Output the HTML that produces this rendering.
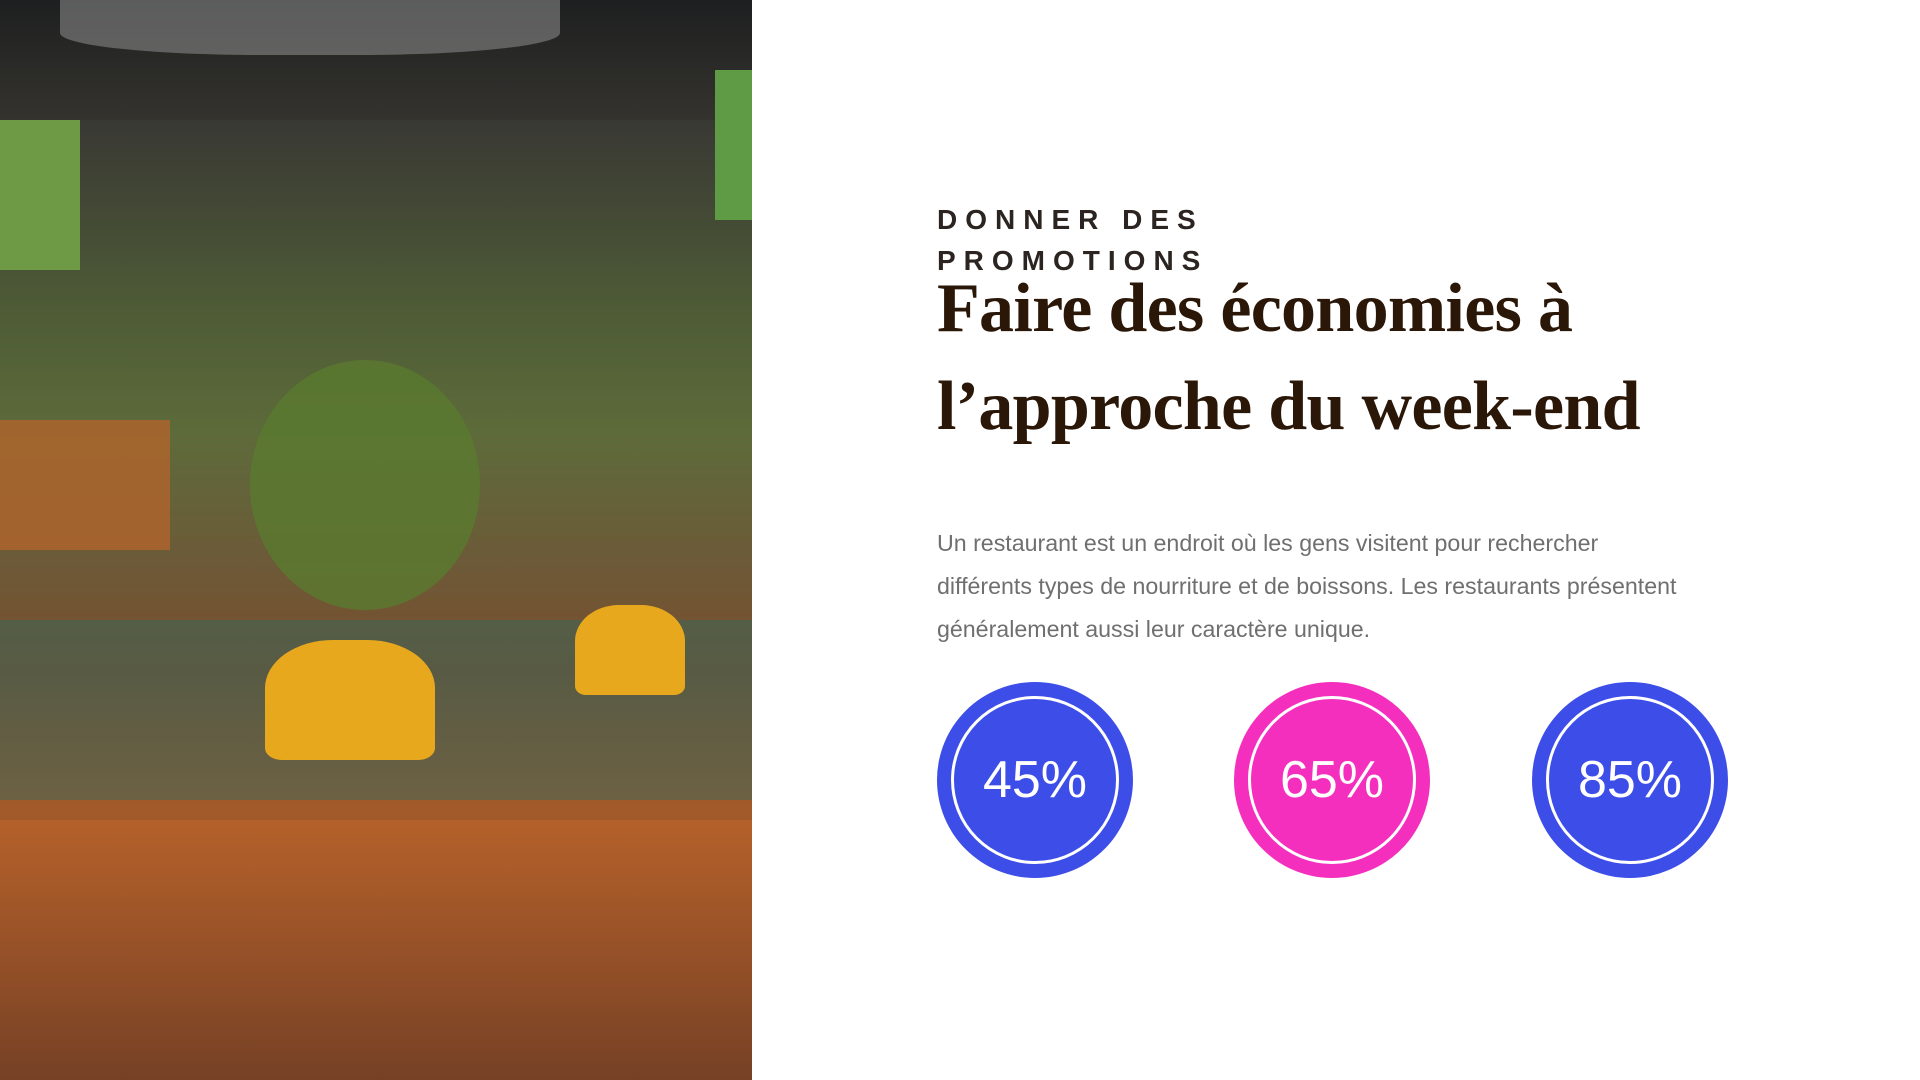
<!DOCTYPE html>
<html><head><meta charset="utf-8"><style>
body{margin:0;width:1920px;height:1080px;position:relative;overflow:hidden;background:#fff;font-family:"Liberation Sans",sans-serif}
.photo{position:absolute;left:0;top:0;width:752px;height:1080px;overflow:hidden;
background:linear-gradient(180deg,#2a2b2c 0%,#3a3a34 12%,#4d5a36 28%,#5d6b3a 40%,#6c5a38 52%,#7a4e2c 62%,#a35a2a 75%,#8a4a26 88%,#5a3420 100%)}
.sub{position:absolute;left:937px;top:199px;font-size:28px;font-weight:bold;letter-spacing:8px;color:#2b2420;line-height:41px}
.title{position:absolute;left:937px;top:260px;font-family:"Liberation Serif",serif;font-weight:bold;font-size:70px;color:#2a1708;line-height:98px;letter-spacing:-0.7px}
.para{position:absolute;left:937px;top:522px;width:900px;font-size:23.2px;color:#6f6f6f;line-height:43px;white-space:nowrap}
.c{position:absolute;top:682px;width:196px;height:196px;border-radius:50%;display:flex;align-items:center;justify-content:center;color:#fff;font-size:52px}
.c::after{content:"";position:absolute;left:14px;top:14px;right:14px;bottom:14px;border:3px solid #fff;border-radius:50%}
</style></head><body>
<div class="photo">
<div style="position:absolute;left:0;top:0;width:752px;height:120px;background:linear-gradient(180deg,#1e1f20,#34332e)"></div>
<div style="position:absolute;left:60px;top:0;width:500px;height:55px;background:#9a9a9a;opacity:.5;border-radius:0 0 40% 40%"></div>
<div style="position:absolute;left:0;top:120px;width:80px;height:150px;background:#6f9a45"></div>
<div style="position:absolute;left:715px;top:70px;width:37px;height:150px;background:#5f9a45"></div>
<div style="position:absolute;left:250px;top:360px;width:230px;height:250px;background:#5a7a30;border-radius:50%;opacity:.8"></div>
<div style="position:absolute;left:0;top:420px;width:170px;height:130px;background:#b2642c;opacity:.8"></div>
<div style="position:absolute;left:0;top:620px;width:752px;height:180px;background:#2f6a62;opacity:.45"></div>
<div style="position:absolute;left:265px;top:640px;width:170px;height:120px;background:#e8a81e;border-radius:40% 40% 10% 10%"></div>
<div style="position:absolute;left:575px;top:605px;width:110px;height:90px;background:#e8a81e;border-radius:40% 40% 10% 10%"></div>
<div style="position:absolute;left:0;top:820px;width:752px;height:260px;background:linear-gradient(180deg,#b8622a,#7a4326);opacity:.85"></div>
</div>
<div class="sub">DONNER DES<br>PROMOTIONS</div>
<div class="title">Faire des économies à<br>l’approche du week-end</div>
<div class="para">Un restaurant est un endroit où les gens visitent pour rechercher<br>différents types de nourriture et de boissons. Les restaurants présentent<br>généralement aussi leur caractère unique.</div>
<div class="c" style="left:937px;background:#3d4de8">45%</div>
<div class="c" style="left:1234px;background:#f52fbd">65%</div>
<div class="c" style="left:1532px;background:#3d4de8">85%</div>
</body></html>
